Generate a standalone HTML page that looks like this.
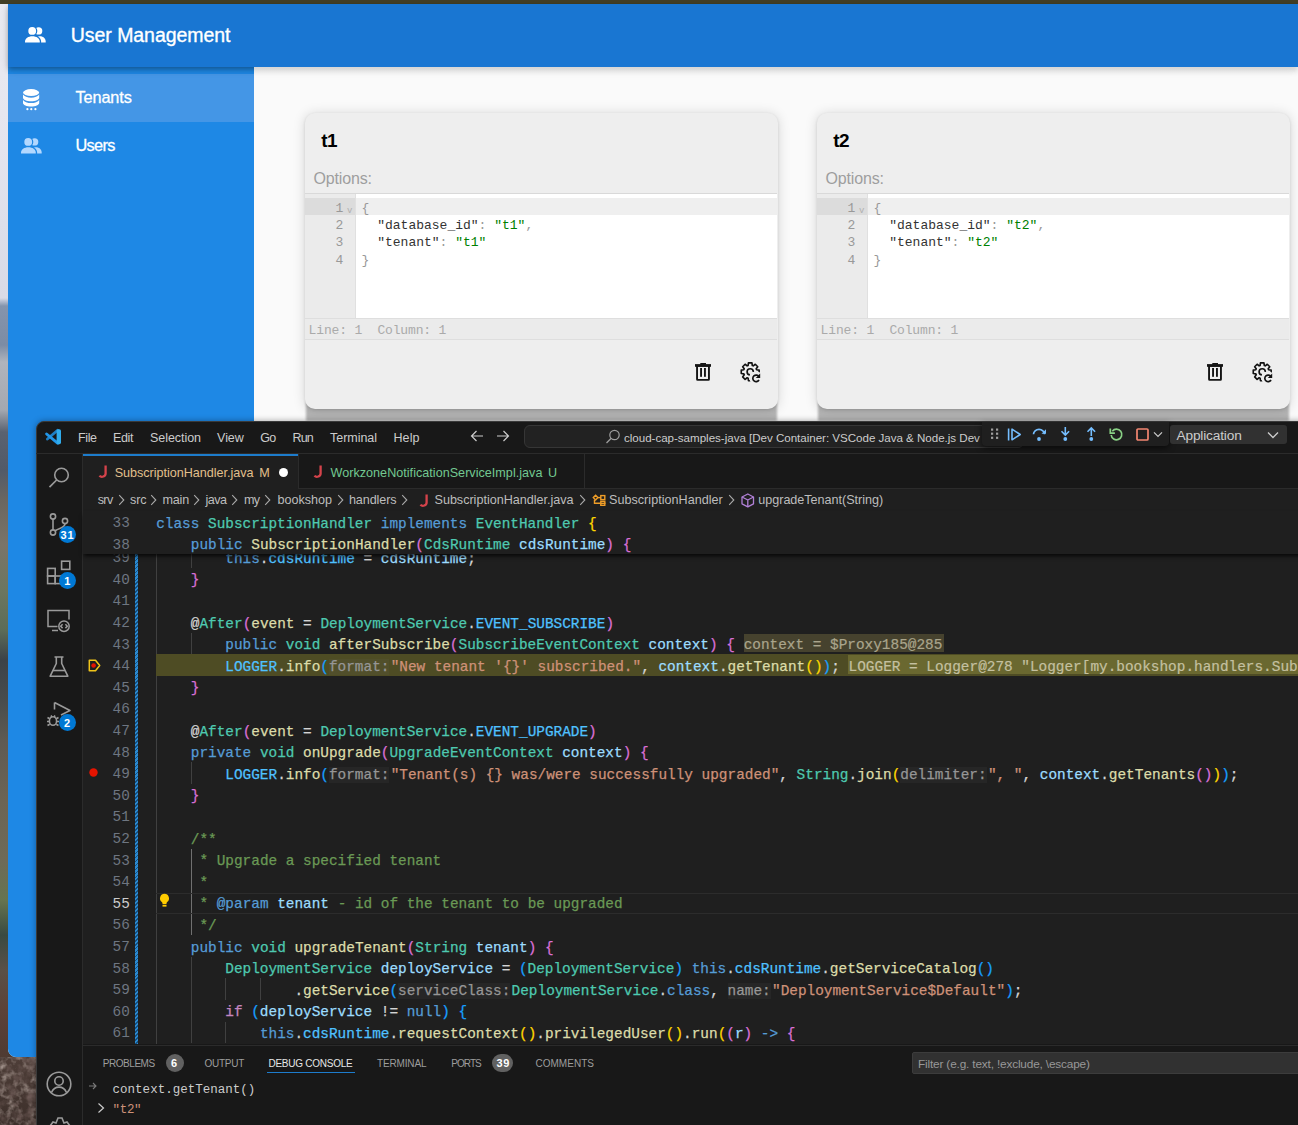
<!DOCTYPE html>
<html><head><meta charset="utf-8"><style>
html,body{margin:0;padding:0;width:1298px;height:1125px;overflow:hidden;background:#4a3a33}
.t{position:absolute;white-space:pre}
.r{position:absolute}
svg.r{overflow:visible}
</style></head><body>
<div class="r" style="left:0.0px;top:0.0px;width:8.0px;height:1125.0px;background:linear-gradient(180deg,#ececf2 0px,#e4e4ee 150px,#d8dae6 298px,#8494ac 306px,#7c8ca4 345px,#b0b4bc 362px,#a4a8b0 410px,#5a6270 432px,#525a68 470px,#6a6660 500px,#7a7468 545px,#6c7660 590px,#5c6c58 630px,#3c4248 660px,#484c4c 700px,#5e5a52 740px,#6c6454 800px,#6e6a58 860px,#667450 900px,#3a4a40 935px,#5a5046 970px,#5c4238 1010px,#4e3a32 1060px,#3e2e28 1125px)"></div>
<div class="r" style="left:0.0px;top:1057.0px;width:36.0px;height:68.0px;background:linear-gradient(180deg,#4e3e38,#3c2f2a)"></div>
<svg class="r" style="left:0.0px;top:1057.0px;" width="36" height="68" viewBox="0 0 36 68"><filter id="nz" x="0" y="0" width="100%" height="100%"><feTurbulence type="fractalNoise" baseFrequency="0.13" numOctaves="3" seed="3"/><feColorMatrix values="0 0 0 0 0.55  0 0 0 0 0.46  0 0 0 0 0.42  0 0 0 1.8 -0.85"/></filter><rect width="36" height="68" filter="url(#nz)"/></svg>
<svg class="r" style="left:0.0px;top:1057.0px;" width="36" height="68" viewBox="0 0 36 68"><filter id="nz2" x="0" y="0" width="100%" height="100%"><feTurbulence type="fractalNoise" baseFrequency="0.11" numOctaves="3" seed="9"/><feColorMatrix values="0 0 0 0 0.15  0 0 0 0 0.1  0 0 0 0 0.09  0 0 0 2.2 -0.95"/></filter><rect width="36" height="68" filter="url(#nz2)"/></svg>
<div class="r" style="left:0.0px;top:0.0px;width:1298.0px;height:4.0px;background:#433f26"></div>
<div class="r" style="left:8.0px;top:4.0px;width:1290.0px;height:1053.0px;background:#fafafa;border-bottom-left-radius:8px;overflow:hidden"></div>
<div class="r" style="left:8.0px;top:67.0px;width:246.0px;height:990.0px;background:#1e88e5;border-bottom-left-radius:8px"></div>
<div class="r" style="left:8.0px;top:74.0px;width:246.0px;height:48.0px;background:#4496e6"></div>
<div class="r" style="left:8.0px;top:4.0px;width:1290.0px;height:63.0px;background:#1976d2;box-shadow:0 2px 4px -1px rgba(0,0,0,.2),0 4px 5px 0 rgba(0,0,0,.14),0 1px 10px 0 rgba(0,0,0,.12)"></div>
<div class="r" style="left:254.0px;top:67.0px;width:1044.0px;height:8.0px;background:linear-gradient(180deg,rgba(250,250,250,.55),rgba(250,250,250,0))"></div>
<div class="t" style="left:70.8px;top:24.4px;font-size:19.50px;line-height:22px;color:#ffffff;font-family:'Liberation Sans', sans-serif;letter-spacing:-0.052px;-webkit-text-stroke:0.35px #fff;">User Management</div>
<div class="t" style="left:75.4px;top:88.1px;font-size:16.30px;line-height:18px;color:#ffffff;font-family:'Liberation Sans', sans-serif;letter-spacing:-0.080px;-webkit-text-stroke:0.3px #fff;">Tenants</div>
<div class="t" style="left:75.4px;top:135.5px;font-size:16.30px;line-height:18px;color:#ffffff;font-family:'Liberation Sans', sans-serif;letter-spacing:-0.616px;-webkit-text-stroke:0.3px #fff;">Users</div>
<svg class="r" style="left:25.0px;top:27.0px;" width="22" height="16" viewBox="0 0 22 16"><defs><mask id="pma" maskUnits="userSpaceOnUse" x="-2" y="-2" width="26" height="20"><rect x="-2" y="-2" width="26" height="20" fill="#fff"/><circle cx="7.2" cy="3.9" r="5.1" fill="#000"/><path d="M-1.3 16.8v-2.3c0-3.8 3.9-6.6 8.7-6.6s8.7 2.8 8.7 6.6v2.3z" fill="#000"/></mask></defs><g transform="translate(0,0) scale(1)" fill="#ffffff"><circle cx="7.2" cy="3.9" r="3.9"/><path d="M0 15.5v-1c0-3.1 3.3-5.3 7.4-5.3s7.4 2.2 7.4 5.3v1z"/><g mask="url(#pma)"><circle cx="13.6" cy="3.9" r="3.7"/><path d="M9.5 15.5v-1c0-3.1 2.6-5.3 5.6-5.3s5.6 2.2 5.6 5.3v1z"/></g></g></svg>
<svg class="r" style="left:21.0px;top:137.5px;" width="22" height="16" viewBox="0 0 22 16"><defs><mask id="pmb" maskUnits="userSpaceOnUse" x="-2" y="-2" width="26" height="20"><rect x="-2" y="-2" width="26" height="20" fill="#fff"/><circle cx="7.2" cy="3.9" r="5.1" fill="#000"/><path d="M-1.3 16.8v-2.3c0-3.8 3.9-6.6 8.7-6.6s8.7 2.8 8.7 6.6v2.3z" fill="#000"/></mask></defs><g transform="translate(0,0) scale(1)" fill="#b3d8ff"><circle cx="7.2" cy="3.9" r="3.9"/><path d="M0 15.5v-1c0-3.1 3.3-5.3 7.4-5.3s7.4 2.2 7.4 5.3v1z"/><g mask="url(#pmb)"><circle cx="13.6" cy="3.9" r="3.7"/><path d="M9.5 15.5v-1c0-3.1 2.6-5.3 5.6-5.3s5.6 2.2 5.6 5.3v1z"/></g></g></svg>
<svg class="r" style="left:23.0px;top:89.0px;" width="18" height="22" viewBox="0 0 18 22"><g fill="#fff"><ellipse cx="8.1" cy="3.6" rx="8.1" ry="3.5"/><path d="M0 5.6c1.2 2 4.4 3.1 8.1 3.1s6.9-1.1 8.1-3.1v3.2c0 1.9-3.6 3.5-8.1 3.5S0 10.7 0 8.8z"/><path d="M0 10.9c1.2 2 4.4 3.1 8.1 3.1s6.9-1.1 8.1-3.1v3.2c0 1.9-3.6 3.5-8.1 3.5S0 16 0 14.1z"/><circle cx="4.4" cy="20.2" r="1.1"/><circle cx="8.3" cy="20.2" r="1.1"/><circle cx="12.4" cy="20.2" r="1.1"/></g></svg>
<div class="r" style="left:306.0px;top:402.0px;width:471.0px;height:19.0px;background:#b5b5b5;filter:blur(1.2px)"></div>
<div class="r" style="left:305.0px;top:112.5px;width:473.0px;height:296.0px;background:#eeeeee;border-radius:10px;box-shadow:0 1px 12px 1px rgba(0,0,0,.13),0 1px 3px rgba(0,0,0,.12)"></div>
<div class="t" style="left:321.2px;top:129.6px;font-size:19.00px;line-height:21px;color:#000000;font-family:'Liberation Sans', sans-serif;font-weight:bold;letter-spacing:-0.6px;">t1</div>
<div class="t" style="left:313.5px;top:169.6px;font-size:16.00px;line-height:17px;color:#9e9e9e;font-family:'Liberation Sans', sans-serif;letter-spacing:-0.163px;">Options:</div>
<div class="r" style="left:305.0px;top:193.0px;width:472.0px;height:1.0px;background:#d9d9d9"></div>
<div class="r" style="left:305.0px;top:194.0px;width:472.0px;height:124.0px;background:#ffffff"></div>
<div class="r" style="left:305.0px;top:194.0px;width:50.0px;height:124.0px;background:#ebebeb"></div>
<div class="r" style="left:355.0px;top:194.0px;width:1.0px;height:124.0px;background:#e0e0e0"></div>
<div class="r" style="left:305.0px;top:198.3px;width:50.0px;height:17.2px;background:#dcdcdc"></div>
<div class="r" style="left:356.0px;top:198.3px;width:421.0px;height:17.2px;background:#efefef"></div>
<div class="r" style="left:305.0px;top:318.0px;width:472.0px;height:22.0px;background:#ebebeb;border-top:1px solid #dedede;border-bottom:1px solid #dedede;box-sizing:border-box"></div>
<div class="t" style="left:335.6px;top:200.8px;font-size:13.00px;line-height:15px;color:#999999;font-family:'Liberation Mono', monospace;">1</div>
<div class="t" style="left:335.6px;top:218.1px;font-size:13.00px;line-height:15px;color:#999999;font-family:'Liberation Mono', monospace;">2</div>
<div class="t" style="left:335.6px;top:235.3px;font-size:13.00px;line-height:15px;color:#999999;font-family:'Liberation Mono', monospace;">3</div>
<div class="t" style="left:335.6px;top:252.6px;font-size:13.00px;line-height:15px;color:#999999;font-family:'Liberation Mono', monospace;">4</div>
<div class="t" style="left:347.0px;top:206.0px;font-size:9.00px;line-height:10px;color:#b0b0b0;font-family:'Liberation Mono', monospace;">v</div>
<div class="t" style="left:361.6px;top:200.8px;font-size:13.00px;line-height:15px;color:#333333;font-family:'Liberation Mono', monospace;"><span style="color:#999999">{</span></div>
<div class="t" style="left:377.2px;top:218.1px;font-size:13.00px;line-height:15px;color:#333333;font-family:'Liberation Mono', monospace;"><span style="color:#333333">&quot;database_id&quot;</span><span style="color:#999999">: </span><span style="color:#008000">&quot;t1&quot;</span><span style="color:#999999">,</span></div>
<div class="t" style="left:377.2px;top:235.3px;font-size:13.00px;line-height:15px;color:#333333;font-family:'Liberation Mono', monospace;"><span style="color:#333333">&quot;tenant&quot;</span><span style="color:#999999">: </span><span style="color:#008000">&quot;t1&quot;</span></div>
<div class="t" style="left:361.6px;top:252.6px;font-size:13.00px;line-height:15px;color:#333333;font-family:'Liberation Mono', monospace;"><span style="color:#999999">}</span></div>
<div class="t" style="left:308.6px;top:322.6px;font-size:13.00px;line-height:15px;color:#aaaaaa;font-family:'Liberation Mono', monospace;letter-spacing:-0.156px;">Line: 1  Column: 1</div>
<svg class="r" style="left:695.0px;top:363.0px;" width="16" height="18" viewBox="0 0 16 18"><g fill="#141414"><rect x="0" y="1.1" width="16" height="2.7"/><rect x="5.3" y="0" width="5.7" height="1.8"/><path fill-rule="evenodd" d="M1.1 2.8H14.9V16.3a1.5 1.5 0 0 1-1.5 1.5H2.6a1.5 1.5 0 0 1-1.5-1.5z M3 3.8H13V15.9H3z"/><rect x="5.1" y="5" width="1.9" height="8.8"/><rect x="9" y="5" width="1.9" height="8.8"/></g></svg>
<svg class="r" style="left:736.0px;top:358.0px;" width="30" height="28" viewBox="0 0 30 28"><defs><mask id="g305" maskUnits="userSpaceOnUse" x="0" y="0" width="30" height="28"><rect width="30" height="28" fill="#fff"/><circle cx="20.4" cy="20.4" r="6.9" fill="#000"/></mask><mask id="g305c" maskUnits="userSpaceOnUse" x="0" y="0" width="30" height="28"><rect width="30" height="28" fill="#fff"/><path d="M14.2 13.8L22 14.2V24H13.2z" fill="#000"/></mask></defs><g fill="none" stroke="#111" stroke-width="1.65" stroke-linejoin="round"><path mask="url(#g305)" d="M12.13 7.43 L12.46 4.87 L15.94 4.87 L16.27 7.43 L17.24 7.83 L19.29 6.26 L21.74 8.71 L20.17 10.76 L20.57 11.73 L23.13 12.06 L23.13 15.54 L20.57 15.87 L20.17 16.84 L21.74 18.89 L19.29 21.34 L17.24 19.77 L16.27 20.17 L15.94 22.73 L12.46 22.73 L12.13 20.17 L11.16 19.77 L9.11 21.34 L6.66 18.89 L8.23 16.84 L7.83 15.87 L5.27 15.54 L5.27 12.06 L7.83 11.73 L8.23 10.76 L6.66 8.71 L9.11 6.26 L11.16 7.83Z"/><circle mask="url(#g305c)" cx="14.2" cy="13.8" r="3.1"/><path d="M22.9 18.6A3.3 3.3 0 1 0 23 22"/></g><path d="M24.2 15.6v4.4h-4.4z" fill="#111"/></svg>
<div class="r" style="left:818.0px;top:402.0px;width:471.0px;height:19.0px;background:#b5b5b5;filter:blur(1.2px)"></div>
<div class="r" style="left:817.0px;top:112.5px;width:473.0px;height:296.0px;background:#eeeeee;border-radius:10px;box-shadow:0 1px 12px 1px rgba(0,0,0,.13),0 1px 3px rgba(0,0,0,.12)"></div>
<div class="t" style="left:833.2px;top:129.6px;font-size:19.00px;line-height:21px;color:#000000;font-family:'Liberation Sans', sans-serif;font-weight:bold;letter-spacing:-0.6px;">t2</div>
<div class="t" style="left:825.5px;top:169.6px;font-size:16.00px;line-height:17px;color:#9e9e9e;font-family:'Liberation Sans', sans-serif;letter-spacing:-0.163px;">Options:</div>
<div class="r" style="left:817.0px;top:193.0px;width:472.0px;height:1.0px;background:#d9d9d9"></div>
<div class="r" style="left:817.0px;top:194.0px;width:472.0px;height:124.0px;background:#ffffff"></div>
<div class="r" style="left:817.0px;top:194.0px;width:50.0px;height:124.0px;background:#ebebeb"></div>
<div class="r" style="left:867.0px;top:194.0px;width:1.0px;height:124.0px;background:#e0e0e0"></div>
<div class="r" style="left:817.0px;top:198.3px;width:50.0px;height:17.2px;background:#dcdcdc"></div>
<div class="r" style="left:868.0px;top:198.3px;width:421.0px;height:17.2px;background:#efefef"></div>
<div class="r" style="left:817.0px;top:318.0px;width:472.0px;height:22.0px;background:#ebebeb;border-top:1px solid #dedede;border-bottom:1px solid #dedede;box-sizing:border-box"></div>
<div class="t" style="left:847.6px;top:200.8px;font-size:13.00px;line-height:15px;color:#999999;font-family:'Liberation Mono', monospace;">1</div>
<div class="t" style="left:847.6px;top:218.1px;font-size:13.00px;line-height:15px;color:#999999;font-family:'Liberation Mono', monospace;">2</div>
<div class="t" style="left:847.6px;top:235.3px;font-size:13.00px;line-height:15px;color:#999999;font-family:'Liberation Mono', monospace;">3</div>
<div class="t" style="left:847.6px;top:252.6px;font-size:13.00px;line-height:15px;color:#999999;font-family:'Liberation Mono', monospace;">4</div>
<div class="t" style="left:859.0px;top:206.0px;font-size:9.00px;line-height:10px;color:#b0b0b0;font-family:'Liberation Mono', monospace;">v</div>
<div class="t" style="left:873.6px;top:200.8px;font-size:13.00px;line-height:15px;color:#333333;font-family:'Liberation Mono', monospace;"><span style="color:#999999">{</span></div>
<div class="t" style="left:889.2px;top:218.1px;font-size:13.00px;line-height:15px;color:#333333;font-family:'Liberation Mono', monospace;"><span style="color:#333333">&quot;database_id&quot;</span><span style="color:#999999">: </span><span style="color:#008000">&quot;t2&quot;</span><span style="color:#999999">,</span></div>
<div class="t" style="left:889.2px;top:235.3px;font-size:13.00px;line-height:15px;color:#333333;font-family:'Liberation Mono', monospace;"><span style="color:#333333">&quot;tenant&quot;</span><span style="color:#999999">: </span><span style="color:#008000">&quot;t2&quot;</span></div>
<div class="t" style="left:873.6px;top:252.6px;font-size:13.00px;line-height:15px;color:#333333;font-family:'Liberation Mono', monospace;"><span style="color:#999999">}</span></div>
<div class="t" style="left:820.6px;top:322.6px;font-size:13.00px;line-height:15px;color:#aaaaaa;font-family:'Liberation Mono', monospace;letter-spacing:-0.156px;">Line: 1  Column: 1</div>
<svg class="r" style="left:1207.0px;top:363.0px;" width="16" height="18" viewBox="0 0 16 18"><g fill="#141414"><rect x="0" y="1.1" width="16" height="2.7"/><rect x="5.3" y="0" width="5.7" height="1.8"/><path fill-rule="evenodd" d="M1.1 2.8H14.9V16.3a1.5 1.5 0 0 1-1.5 1.5H2.6a1.5 1.5 0 0 1-1.5-1.5z M3 3.8H13V15.9H3z"/><rect x="5.1" y="5" width="1.9" height="8.8"/><rect x="9" y="5" width="1.9" height="8.8"/></g></svg>
<svg class="r" style="left:1248.0px;top:358.0px;" width="30" height="28" viewBox="0 0 30 28"><defs><mask id="g817" maskUnits="userSpaceOnUse" x="0" y="0" width="30" height="28"><rect width="30" height="28" fill="#fff"/><circle cx="20.4" cy="20.4" r="6.9" fill="#000"/></mask><mask id="g817c" maskUnits="userSpaceOnUse" x="0" y="0" width="30" height="28"><rect width="30" height="28" fill="#fff"/><path d="M14.2 13.8L22 14.2V24H13.2z" fill="#000"/></mask></defs><g fill="none" stroke="#111" stroke-width="1.65" stroke-linejoin="round"><path mask="url(#g817)" d="M12.13 7.43 L12.46 4.87 L15.94 4.87 L16.27 7.43 L17.24 7.83 L19.29 6.26 L21.74 8.71 L20.17 10.76 L20.57 11.73 L23.13 12.06 L23.13 15.54 L20.57 15.87 L20.17 16.84 L21.74 18.89 L19.29 21.34 L17.24 19.77 L16.27 20.17 L15.94 22.73 L12.46 22.73 L12.13 20.17 L11.16 19.77 L9.11 21.34 L6.66 18.89 L8.23 16.84 L7.83 15.87 L5.27 15.54 L5.27 12.06 L7.83 11.73 L8.23 10.76 L6.66 8.71 L9.11 6.26 L11.16 7.83Z"/><circle mask="url(#g817c)" cx="14.2" cy="13.8" r="3.1"/><path d="M22.9 18.6A3.3 3.3 0 1 0 23 22"/></g><path d="M24.2 15.6v4.4h-4.4z" fill="#111"/></svg>
<div class="r" style="left:36.0px;top:421.0px;width:1272.0px;height:714.0px;background:#181818;border-top-left-radius:8px;box-shadow:0 0 6px rgba(0,0,0,.35);border:1px solid #3a3a3a;box-sizing:border-box"></div>
<div class="r" style="left:36.0px;top:453.0px;width:1262.0px;height:1.0px;background:#2b2b2b"></div>
<svg class="r" style="left:44.0px;top:428.0px;" width="18" height="18" viewBox="0 0 18 18"><g stroke-linecap="round"><path d="M13.6 2.2L3.4 11" stroke="#1e7fc4" stroke-width="2.8"/><path d="M13.6 15.2L2.6 6" stroke="#2196e8" stroke-width="2.9"/><rect x="12.6" y="1.2" width="4.4" height="15" rx="1.6" fill="#30acec"/></g></svg>
<div class="t" style="left:78.0px;top:430.6px;font-size:12.50px;line-height:14px;color:#cccccc;font-family:'Liberation Sans', sans-serif;letter-spacing:-0.385px;">File</div>
<div class="t" style="left:113.1px;top:430.6px;font-size:12.50px;line-height:14px;color:#cccccc;font-family:'Liberation Sans', sans-serif;letter-spacing:-0.382px;">Edit</div>
<div class="t" style="left:150.1px;top:430.6px;font-size:12.50px;line-height:14px;color:#cccccc;font-family:'Liberation Sans', sans-serif;letter-spacing:-0.067px;">Selection</div>
<div class="t" style="left:217.1px;top:430.6px;font-size:12.50px;line-height:14px;color:#cccccc;font-family:'Liberation Sans', sans-serif;letter-spacing:-0.064px;">View</div>
<div class="t" style="left:260.3px;top:430.6px;font-size:12.50px;line-height:14px;color:#cccccc;font-family:'Liberation Sans', sans-serif;letter-spacing:-0.672px;">Go</div>
<div class="t" style="left:292.6px;top:430.6px;font-size:12.50px;line-height:14px;color:#cccccc;font-family:'Liberation Sans', sans-serif;letter-spacing:-0.969px;">Run</div>
<div class="t" style="left:330.0px;top:430.6px;font-size:12.50px;line-height:14px;color:#cccccc;font-family:'Liberation Sans', sans-serif;letter-spacing:-0.033px;">Terminal</div>
<div class="t" style="left:393.5px;top:430.6px;font-size:12.50px;line-height:14px;color:#cccccc;font-family:'Liberation Sans', sans-serif;letter-spacing:0.094px;">Help</div>
<svg class="r" style="left:470.0px;top:430.0px;" width="14" height="12" viewBox="0 0 14 12"><path d="M13 6H1.5M6.5 1L1.5 6l5 5" fill="none" stroke="#cccccc" stroke-width="1.2"/></svg>
<svg class="r" style="left:496.0px;top:430.0px;" width="14" height="12" viewBox="0 0 14 12"><path d="M1 6h11.5M7.5 1l5 5-5 5" fill="none" stroke="#cccccc" stroke-width="1.2"/></svg>
<div class="r" style="left:524.3px;top:425.2px;width:500.0px;height:23.2px;background:#222222;border:1px solid #363636;border-radius:6px;box-sizing:border-box"></div>
<svg class="r" style="left:605.0px;top:429.0px;" width="16" height="16" viewBox="0 0 16 16"><circle cx="9.5" cy="6" r="4.7" fill="none" stroke="#9d9d9d" stroke-width="1.2"/><path d="M6.2 9.3L1.5 14" stroke="#9d9d9d" stroke-width="1.3"/></svg>
<div class="t" style="left:624.0px;top:430.5px;font-size:11.60px;line-height:13px;color:#cccccc;font-family:'Liberation Sans', sans-serif;letter-spacing:-0.028px;">cloud-cap-samples-java [Dev Container: VSCode Java &amp; Node.js Dev</div>
<div class="r" style="left:981.5px;top:421.7px;width:187.0px;height:24.5px;background:#1f1f1f;border-radius:0 0 4px 4px;box-shadow:0 2px 6px rgba(0,0,0,.6)"></div>
<svg class="r" style="left:991.0px;top:428.0px;" width="9" height="12" viewBox="0 0 9 12"><g fill="#9d9d9d"><rect x="0" y="0.5" width="2.2" height="2.2"/><rect x="5" y="0.5" width="2.2" height="2.2"/><rect x="0" y="4.6" width="2.2" height="2.2"/><rect x="5" y="4.6" width="2.2" height="2.2"/><rect x="0" y="8.7" width="2.2" height="2.2"/><rect x="5" y="8.7" width="2.2" height="2.2"/></g></svg>
<svg class="r" style="left:1007.0px;top:427.5px;" width="15" height="13" viewBox="0 0 15 13"><rect x="0.8" y="0.5" width="1.6" height="12" fill="#75beff"/><path d="M5 1.2v10.6l8.2-5.3z" fill="none" stroke="#75beff" stroke-width="1.6" stroke-linejoin="round"/></svg>
<svg class="r" style="left:1032.0px;top:427.5px;" width="15" height="14" viewBox="0 0 15 14"><path d="M1.5 6.3a5.5 5 0 0 1 11 0" fill="none" stroke="#75beff" stroke-width="1.7"/><path d="M9.5 5.8h4.5V1.3z" fill="#75beff"/><circle cx="7" cy="11" r="1.9" fill="#75beff"/></svg>
<svg class="r" style="left:1060.0px;top:427.0px;" width="11" height="15" viewBox="0 0 11 15"><path d="M5.3 0v7.5M1.5 4.3l3.8 3.8 3.8-3.8" fill="none" stroke="#75beff" stroke-width="1.6"/><circle cx="5.3" cy="12" r="1.9" fill="#75beff"/></svg>
<svg class="r" style="left:1085.5px;top:427.0px;" width="11" height="15" viewBox="0 0 11 15"><path d="M5.3 1v8M1.5 4.8L5.3 1l3.8 3.8" fill="none" stroke="#75beff" stroke-width="1.6"/><circle cx="5.3" cy="12" r="1.9" fill="#75beff"/></svg>
<svg class="r" style="left:1109.0px;top:427.0px;" width="15" height="14" viewBox="0 0 15 14"><path d="M3.3 4.2A5.3 5.3 0 1 1 2.2 8" fill="none" stroke="#89d185" stroke-width="1.7"/><path d="M1.3 1.5v4.6h4.6" fill="none" stroke="#89d185" stroke-width="1.7"/></svg>
<svg class="r" style="left:1135.5px;top:427.5px;" width="13" height="13" viewBox="0 0 13 13"><rect x="1" y="1" width="11" height="11" rx="1" fill="none" stroke="#f48771" stroke-width="1.7"/></svg>
<svg class="r" style="left:1153.0px;top:431.0px;" width="10" height="7" viewBox="0 0 10 7"><path d="M1 1.3l4 4 4-4" fill="none" stroke="#cccccc" stroke-width="1.2"/></svg>
<div class="r" style="left:1169.6px;top:425.1px;width:117.0px;height:18.6px;background:#313131;border-radius:3px"></div>
<div class="t" style="left:1176.5px;top:428.0px;font-size:13.70px;line-height:15px;color:#cccccc;font-family:'Liberation Sans', sans-serif;letter-spacing:-0.165px;">Application</div>
<svg class="r" style="left:1267.0px;top:431.0px;" width="12" height="8" viewBox="0 0 12 8"><path d="M1 1.5l5 5 5-5" fill="none" stroke="#cccccc" stroke-width="1.3"/></svg>
<div class="r" style="left:82.0px;top:454.0px;width:1.0px;height:700.0px;background:#2b2b2b"></div>
<div class="r" style="left:83.0px;top:454.0px;width:1300.0px;height:590.0px;background:#1f1f1f"></div>
<div class="r" style="left:83.0px;top:454.0px;width:1300.0px;height:34.0px;background:#181818"></div>
<div class="r" style="left:298.0px;top:487.5px;width:1300.0px;height:1.0px;background:#2b2b2b"></div>
<div class="r" style="left:83.0px;top:454.0px;width:215.0px;height:34.0px;background:#1f1f1f"></div>
<div class="r" style="left:83.0px;top:454.0px;width:215.0px;height:1.6px;background:#1d7ccc"></div>
<div class="r" style="left:298.0px;top:454.0px;width:1.0px;height:34.0px;background:#2b2b2b"></div>
<div class="r" style="left:583.5px;top:454.0px;width:1.0px;height:34.0px;background:#2b2b2b"></div>
<svg class="r" style="left:99.0px;top:465.0px;" width="9" height="13" viewBox="0 0 9 13"><path d="M6.6 0.5v7.9a3.6 3.4 0 0 1-6.2 2.3" fill="none" stroke="#d5434b" stroke-width="2.3"/></svg>
<div class="t" style="left:114.7px;top:465.8px;font-size:12.60px;line-height:14px;color:#e2c08d;font-family:'Liberation Sans', sans-serif;letter-spacing:-0.025px;">SubscriptionHandler.java</div>
<div class="t" style="left:259.2px;top:465.5px;font-size:12.60px;line-height:14px;color:#e2c08d;font-family:'Liberation Sans', sans-serif;">M</div>
<div class="r" style="left:278.8px;top:468.2px;width:9.0px;height:9.0px;background:#ffffff;border-radius:50%"></div>
<svg class="r" style="left:314.0px;top:465.0px;" width="9" height="13" viewBox="0 0 9 13"><path d="M6.6 0.5v7.9a3.6 3.4 0 0 1-6.2 2.3" fill="none" stroke="#d5434b" stroke-width="2.3"/></svg>
<div class="t" style="left:330.5px;top:465.8px;font-size:12.60px;line-height:14px;color:#73c991;font-family:'Liberation Sans', sans-serif;letter-spacing:0.021px;">WorkzoneNotificationServiceImpl.java</div>
<div class="t" style="left:548.0px;top:465.5px;font-size:12.60px;line-height:14px;color:#73c991;font-family:'Liberation Sans', sans-serif;">U</div>
<div class="t" style="left:97.7px;top:493.3px;font-size:12.60px;line-height:14px;color:#bdbdbd;font-family:'Liberation Sans', sans-serif;letter-spacing:-0.641px;">srv</div>
<div class="t" style="left:130.0px;top:493.3px;font-size:12.60px;line-height:14px;color:#bdbdbd;font-family:'Liberation Sans', sans-serif;letter-spacing:-0.141px;">src</div>
<div class="t" style="left:162.4px;top:493.3px;font-size:12.60px;line-height:14px;color:#bdbdbd;font-family:'Liberation Sans', sans-serif;letter-spacing:-0.160px;">main</div>
<div class="t" style="left:205.6px;top:493.3px;font-size:12.60px;line-height:14px;color:#bdbdbd;font-family:'Liberation Sans', sans-serif;letter-spacing:-0.565px;">java</div>
<div class="t" style="left:244.0px;top:493.3px;font-size:12.60px;line-height:14px;color:#bdbdbd;font-family:'Liberation Sans', sans-serif;letter-spacing:-0.781px;">my</div>
<div class="t" style="left:277.4px;top:493.3px;font-size:12.60px;line-height:14px;color:#bdbdbd;font-family:'Liberation Sans', sans-serif;letter-spacing:0.001px;">bookshop</div>
<div class="t" style="left:348.9px;top:493.3px;font-size:12.60px;line-height:14px;color:#bdbdbd;font-family:'Liberation Sans', sans-serif;letter-spacing:-0.083px;">handlers</div>
<svg class="r" style="left:117.5px;top:494.0px;" width="7" height="12" viewBox="0 0 7 12"><path d="M1.2 1.2L5.8 6l-4.6 4.8" fill="none" stroke="#a9a9a9" stroke-width="1.1"/></svg>
<svg class="r" style="left:150.0px;top:494.0px;" width="7" height="12" viewBox="0 0 7 12"><path d="M1.2 1.2L5.8 6l-4.6 4.8" fill="none" stroke="#a9a9a9" stroke-width="1.1"/></svg>
<svg class="r" style="left:193.0px;top:494.0px;" width="7" height="12" viewBox="0 0 7 12"><path d="M1.2 1.2L5.8 6l-4.6 4.8" fill="none" stroke="#a9a9a9" stroke-width="1.1"/></svg>
<svg class="r" style="left:230.5px;top:494.0px;" width="7" height="12" viewBox="0 0 7 12"><path d="M1.2 1.2L5.8 6l-4.6 4.8" fill="none" stroke="#a9a9a9" stroke-width="1.1"/></svg>
<svg class="r" style="left:263.5px;top:494.0px;" width="7" height="12" viewBox="0 0 7 12"><path d="M1.2 1.2L5.8 6l-4.6 4.8" fill="none" stroke="#a9a9a9" stroke-width="1.1"/></svg>
<svg class="r" style="left:336.5px;top:494.0px;" width="7" height="12" viewBox="0 0 7 12"><path d="M1.2 1.2L5.8 6l-4.6 4.8" fill="none" stroke="#a9a9a9" stroke-width="1.1"/></svg>
<svg class="r" style="left:401.0px;top:494.0px;" width="7" height="12" viewBox="0 0 7 12"><path d="M1.2 1.2L5.8 6l-4.6 4.8" fill="none" stroke="#a9a9a9" stroke-width="1.1"/></svg>
<svg class="r" style="left:419.5px;top:493.5px;" width="9" height="13" viewBox="0 0 9 13"><path d="M6.6 0.5v7.9a3.6 3.4 0 0 1-6.2 2.3" fill="none" stroke="#d5434b" stroke-width="2.3"/></svg>
<div class="t" style="left:434.5px;top:493.3px;font-size:12.60px;line-height:14px;color:#bdbdbd;font-family:'Liberation Sans', sans-serif;letter-spacing:-0.012px;">SubscriptionHandler.java</div>
<svg class="r" style="left:579.0px;top:494.0px;" width="7" height="12" viewBox="0 0 7 12"><path d="M1.2 1.2L5.8 6l-4.6 4.8" fill="none" stroke="#a9a9a9" stroke-width="1.1"/></svg>
<svg class="r" style="left:590.5px;top:492.5px;" width="16" height="15" viewBox="0 0 16 15"><g fill="none" stroke="#ee9d28" stroke-width="1.4"><path d="M4.6 2.3L2.3 4.6l2.3 2.3 2.3-2.3z"/><path d="M3.5 6.8v3.5h6"/><path d="M9.5 10.3h5"/><rect x="9.8" y="8.3" width="4" height="4"/><path d="M6.8 4.6h3"/><rect x="9.8" y="2.6" width="4" height="4"/></g></svg>
<div class="t" style="left:609.0px;top:493.3px;font-size:12.60px;line-height:14px;color:#bdbdbd;font-family:'Liberation Sans', sans-serif;letter-spacing:0.019px;">SubscriptionHandler</div>
<svg class="r" style="left:728.0px;top:494.0px;" width="7" height="12" viewBox="0 0 7 12"><path d="M1.2 1.2L5.8 6l-4.6 4.8" fill="none" stroke="#a9a9a9" stroke-width="1.1"/></svg>
<svg class="r" style="left:740.5px;top:492.5px;" width="14" height="15" viewBox="0 0 14 15"><g fill="none" stroke="#b180d7" stroke-width="1.3" stroke-linejoin="round"><path d="M6.8 1L12.5 4v6.8L6.8 13.8 1 10.8V4z"/><path d="M1 4l5.8 3 5.7-3M6.8 7v6.8"/></g></svg>
<div class="t" style="left:758.3px;top:493.3px;font-size:12.60px;line-height:14px;color:#bdbdbd;font-family:'Liberation Sans', sans-serif;letter-spacing:-0.027px;">upgradeTenant(String)</div>
<div class="r" style="left:134.8px;top:554.0px;width:3.2px;height:490.0px;background:repeating-linear-gradient(135deg,#2a8ad2 0px,#2a8ad2 1.6px,#17507e 1.6px,#17507e 2.8px)"></div>
<div class="r" style="left:156.0px;top:554.0px;width:1.0px;height:490.0px;background:#404040"></div>
<div class="r" style="left:190.5px;top:554.0px;width:1.0px;height:14.0px;background:#404040"></div>
<div class="r" style="left:190.5px;top:632.8px;width:1.0px;height:43.2px;background:#404040"></div>
<div class="r" style="left:190.5px;top:762.4px;width:1.0px;height:21.6px;background:#404040"></div>
<div class="r" style="left:190.5px;top:848.8px;width:1.0px;height:86.4px;background:#707070"></div>
<div class="r" style="left:190.5px;top:956.8px;width:1.0px;height:86.4px;background:#404040"></div>
<div class="r" style="left:225.0px;top:978.4px;width:1.0px;height:21.6px;background:#404040"></div>
<div class="r" style="left:259.6px;top:978.4px;width:1.0px;height:21.6px;background:#404040"></div>
<div class="r" style="left:225.0px;top:1021.6px;width:1.0px;height:21.6px;background:#404040"></div>
<div class="r" style="left:156.0px;top:654.3px;width:1200.0px;height:21.7px;background:#4e4c24"></div>
<div class="r" style="left:156.0px;top:893.2px;width:1200.0px;height:20.4px;border-top:1.5px solid #2c2c2c;border-bottom:1.5px solid #2c2c2c;box-sizing:border-box"></div>
<div class="t" style="left:225.3px;top:550.8px;font-size:14.40px;line-height:16px;color:#d4d4d4;font-family:'Liberation Mono', monospace;white-space:pre;-webkit-text-stroke:0.25px currentColor;"><span style="color:#569cd6">this</span><span style="color:#d4d4d4">.</span><span style="color:#4fc1ff">cdsRuntime</span><span style="color:#d4d4d4"> = </span><span style="color:#9cdcfe">cdsRuntime</span><span style="color:#d4d4d4">;</span></div>
<div class="t" style="left:112.6px;top:550.2px;font-size:14.40px;line-height:16px;color:#6e7681;font-family:'Liberation Mono', monospace;">39</div>
<div class="t" style="left:112.6px;top:571.8px;font-size:14.40px;line-height:16px;color:#6e7681;font-family:'Liberation Mono', monospace;">40</div>
<div class="t" style="left:190.8px;top:572.4px;font-size:14.40px;line-height:16px;color:#d4d4d4;font-family:'Liberation Mono', monospace;white-space:pre;-webkit-text-stroke:0.25px currentColor;"><span style="color:#da70d6">}</span></div>
<div class="t" style="left:112.6px;top:593.4px;font-size:14.40px;line-height:16px;color:#6e7681;font-family:'Liberation Mono', monospace;">41</div>
<div class="t" style="left:112.6px;top:615.0px;font-size:14.40px;line-height:16px;color:#6e7681;font-family:'Liberation Mono', monospace;">42</div>
<div class="t" style="left:190.8px;top:615.6px;font-size:14.40px;line-height:16px;color:#d4d4d4;font-family:'Liberation Mono', monospace;white-space:pre;-webkit-text-stroke:0.25px currentColor;"><span style="color:#d4d4d4">@</span><span style="color:#4ec9b0">After</span><span style="color:#da70d6">(</span><span style="color:#dcdcaa">event</span><span style="color:#d4d4d4"> = </span><span style="color:#4ec9b0">DeploymentService</span><span style="color:#d4d4d4">.</span><span style="color:#4fc1ff">EVENT_SUBSCRIBE</span><span style="color:#da70d6">)</span></div>
<div class="t" style="left:112.6px;top:636.6px;font-size:14.40px;line-height:16px;color:#6e7681;font-family:'Liberation Mono', monospace;">43</div>
<div class="t" style="left:225.3px;top:637.2px;font-size:14.40px;line-height:16px;color:#d4d4d4;font-family:'Liberation Mono', monospace;white-space:pre;-webkit-text-stroke:0.25px currentColor;"><span style="color:#569cd6">public</span> <span style="color:#4ec9b0">void</span> <span style="color:#dcdcaa">afterSubscribe</span><span style="color:#da70d6">(</span><span style="color:#4ec9b0">SubscribeEventContext</span> <span style="color:#9cdcfe">context</span><span style="color:#da70d6">)</span> <span style="color:#da70d6">{</span></div>
<div class="t" style="left:112.6px;top:658.2px;font-size:14.40px;line-height:16px;color:#6e7681;font-family:'Liberation Mono', monospace;">44</div>
<div class="t" style="left:225.3px;top:658.8px;font-size:14.40px;line-height:16px;color:#d4d4d4;font-family:'Liberation Mono', monospace;white-space:pre;-webkit-text-stroke:0.25px currentColor;"><span style="color:#4fc1ff">LOGGER</span><span style="color:#d4d4d4">.</span><span style="color:#dcdcaa">info</span><span style="color:#179fff">(</span><span style="color:#969696;background:rgba(110,110,110,.1);margin-right:1.3px">format:</span><span style="color:#ce9178">&quot;New tenant &#x27;{}&#x27; subscribed.&quot;</span><span style="color:#d4d4d4">, </span><span style="color:#9cdcfe">context</span><span style="color:#d4d4d4">.</span><span style="color:#dcdcaa">getTenant</span><span style="color:#ffd700">(</span><span style="color:#ffd700">)</span><span style="color:#179fff">)</span><span style="color:#d4d4d4">;</span></div>
<div class="t" style="left:112.6px;top:679.8px;font-size:14.40px;line-height:16px;color:#6e7681;font-family:'Liberation Mono', monospace;">45</div>
<div class="t" style="left:190.8px;top:680.4px;font-size:14.40px;line-height:16px;color:#d4d4d4;font-family:'Liberation Mono', monospace;white-space:pre;-webkit-text-stroke:0.25px currentColor;"><span style="color:#da70d6">}</span></div>
<div class="t" style="left:112.6px;top:701.4px;font-size:14.40px;line-height:16px;color:#6e7681;font-family:'Liberation Mono', monospace;">46</div>
<div class="t" style="left:112.6px;top:723.0px;font-size:14.40px;line-height:16px;color:#6e7681;font-family:'Liberation Mono', monospace;">47</div>
<div class="t" style="left:190.8px;top:723.6px;font-size:14.40px;line-height:16px;color:#d4d4d4;font-family:'Liberation Mono', monospace;white-space:pre;-webkit-text-stroke:0.25px currentColor;"><span style="color:#d4d4d4">@</span><span style="color:#4ec9b0">After</span><span style="color:#da70d6">(</span><span style="color:#dcdcaa">event</span><span style="color:#d4d4d4"> = </span><span style="color:#4ec9b0">DeploymentService</span><span style="color:#d4d4d4">.</span><span style="color:#4fc1ff">EVENT_UPGRADE</span><span style="color:#da70d6">)</span></div>
<div class="t" style="left:112.6px;top:744.6px;font-size:14.40px;line-height:16px;color:#6e7681;font-family:'Liberation Mono', monospace;">48</div>
<div class="t" style="left:190.8px;top:745.2px;font-size:14.40px;line-height:16px;color:#d4d4d4;font-family:'Liberation Mono', monospace;white-space:pre;-webkit-text-stroke:0.25px currentColor;"><span style="color:#569cd6">private</span> <span style="color:#4ec9b0">void</span> <span style="color:#dcdcaa">onUpgrade</span><span style="color:#da70d6">(</span><span style="color:#4ec9b0">UpgradeEventContext</span> <span style="color:#9cdcfe">context</span><span style="color:#da70d6">)</span> <span style="color:#da70d6">{</span></div>
<div class="t" style="left:112.6px;top:766.2px;font-size:14.40px;line-height:16px;color:#6e7681;font-family:'Liberation Mono', monospace;">49</div>
<div class="t" style="left:225.3px;top:766.8px;font-size:14.40px;line-height:16px;color:#d4d4d4;font-family:'Liberation Mono', monospace;white-space:pre;-webkit-text-stroke:0.25px currentColor;"><span style="color:#4fc1ff">LOGGER</span><span style="color:#d4d4d4">.</span><span style="color:#dcdcaa">info</span><span style="color:#179fff">(</span><span style="color:#969696;background:rgba(110,110,110,.1);margin-right:1.3px">format:</span><span style="color:#ce9178">&quot;Tenant(s) {} was/were successfully upgraded&quot;</span><span style="color:#d4d4d4">, </span><span style="color:#4ec9b0">String</span><span style="color:#d4d4d4">.</span><span style="color:#dcdcaa">join</span><span style="color:#ffd700">(</span><span style="color:#969696;background:rgba(110,110,110,.1);margin-right:1.3px">delimiter:</span><span style="color:#ce9178">&quot;, &quot;</span><span style="color:#d4d4d4">, </span><span style="color:#9cdcfe">context</span><span style="color:#d4d4d4">.</span><span style="color:#dcdcaa">getTenants</span><span style="color:#da70d6">(</span><span style="color:#da70d6">)</span><span style="color:#ffd700">)</span><span style="color:#179fff">)</span><span style="color:#d4d4d4">;</span></div>
<div class="t" style="left:112.6px;top:787.8px;font-size:14.40px;line-height:16px;color:#6e7681;font-family:'Liberation Mono', monospace;">50</div>
<div class="t" style="left:190.8px;top:788.4px;font-size:14.40px;line-height:16px;color:#d4d4d4;font-family:'Liberation Mono', monospace;white-space:pre;-webkit-text-stroke:0.25px currentColor;"><span style="color:#da70d6">}</span></div>
<div class="t" style="left:112.6px;top:809.4px;font-size:14.40px;line-height:16px;color:#6e7681;font-family:'Liberation Mono', monospace;">51</div>
<div class="t" style="left:112.6px;top:831.0px;font-size:14.40px;line-height:16px;color:#6e7681;font-family:'Liberation Mono', monospace;">52</div>
<div class="t" style="left:190.8px;top:831.6px;font-size:14.40px;line-height:16px;color:#d4d4d4;font-family:'Liberation Mono', monospace;white-space:pre;-webkit-text-stroke:0.25px currentColor;"><span style="color:#6a9955">/**</span></div>
<div class="t" style="left:112.6px;top:852.6px;font-size:14.40px;line-height:16px;color:#6e7681;font-family:'Liberation Mono', monospace;">53</div>
<div class="t" style="left:190.8px;top:853.2px;font-size:14.40px;line-height:16px;color:#d4d4d4;font-family:'Liberation Mono', monospace;white-space:pre;-webkit-text-stroke:0.25px currentColor;"><span style="color:#6a9955"> * Upgrade a specified tenant</span></div>
<div class="t" style="left:112.6px;top:874.2px;font-size:14.40px;line-height:16px;color:#6e7681;font-family:'Liberation Mono', monospace;">54</div>
<div class="t" style="left:190.8px;top:874.8px;font-size:14.40px;line-height:16px;color:#d4d4d4;font-family:'Liberation Mono', monospace;white-space:pre;-webkit-text-stroke:0.25px currentColor;"><span style="color:#6a9955"> *</span></div>
<div class="t" style="left:112.6px;top:895.8px;font-size:14.40px;line-height:16px;color:#cccccc;font-family:'Liberation Mono', monospace;">55</div>
<div class="t" style="left:190.8px;top:896.4px;font-size:14.40px;line-height:16px;color:#d4d4d4;font-family:'Liberation Mono', monospace;white-space:pre;-webkit-text-stroke:0.25px currentColor;"><span style="color:#6a9955"> * </span><span style="color:#569cd6">@param</span> <span style="color:#9cdcfe">tenant</span><span style="color:#6a9955"> - id of the tenant to be upgraded</span></div>
<div class="t" style="left:112.6px;top:917.4px;font-size:14.40px;line-height:16px;color:#6e7681;font-family:'Liberation Mono', monospace;">56</div>
<div class="t" style="left:190.8px;top:918.0px;font-size:14.40px;line-height:16px;color:#d4d4d4;font-family:'Liberation Mono', monospace;white-space:pre;-webkit-text-stroke:0.25px currentColor;"><span style="color:#6a9955"> */</span></div>
<div class="t" style="left:112.6px;top:939.0px;font-size:14.40px;line-height:16px;color:#6e7681;font-family:'Liberation Mono', monospace;">57</div>
<div class="t" style="left:190.8px;top:939.6px;font-size:14.40px;line-height:16px;color:#d4d4d4;font-family:'Liberation Mono', monospace;white-space:pre;-webkit-text-stroke:0.25px currentColor;"><span style="color:#569cd6">public</span> <span style="color:#4ec9b0">void</span> <span style="color:#dcdcaa">upgradeTenant</span><span style="color:#da70d6">(</span><span style="color:#4ec9b0">String</span> <span style="color:#9cdcfe">tenant</span><span style="color:#da70d6">)</span> <span style="color:#da70d6">{</span></div>
<div class="t" style="left:112.6px;top:960.6px;font-size:14.40px;line-height:16px;color:#6e7681;font-family:'Liberation Mono', monospace;">58</div>
<div class="t" style="left:225.3px;top:961.2px;font-size:14.40px;line-height:16px;color:#d4d4d4;font-family:'Liberation Mono', monospace;white-space:pre;-webkit-text-stroke:0.25px currentColor;"><span style="color:#4ec9b0">DeploymentService</span> <span style="color:#9cdcfe">deployService</span><span style="color:#d4d4d4"> = </span><span style="color:#179fff">(</span><span style="color:#4ec9b0">DeploymentService</span><span style="color:#179fff">)</span> <span style="color:#569cd6">this</span><span style="color:#d4d4d4">.</span><span style="color:#4fc1ff">cdsRuntime</span><span style="color:#d4d4d4">.</span><span style="color:#dcdcaa">getServiceCatalog</span><span style="color:#179fff">(</span><span style="color:#179fff">)</span></div>
<div class="t" style="left:112.6px;top:982.2px;font-size:14.40px;line-height:16px;color:#6e7681;font-family:'Liberation Mono', monospace;">59</div>
<div class="t" style="left:294.4px;top:982.8px;font-size:14.40px;line-height:16px;color:#d4d4d4;font-family:'Liberation Mono', monospace;white-space:pre;-webkit-text-stroke:0.25px currentColor;"><span style="color:#d4d4d4">.</span><span style="color:#dcdcaa">getService</span><span style="color:#179fff">(</span><span style="color:#969696;background:rgba(110,110,110,.1);margin-right:1.3px">serviceClass:</span><span style="color:#4ec9b0">DeploymentService</span><span style="color:#d4d4d4">.</span><span style="color:#569cd6">class</span><span style="color:#d4d4d4">, </span><span style="color:#969696;background:rgba(110,110,110,.1);margin-right:1.3px">name:</span><span style="color:#ce9178">&quot;DeploymentService$Default&quot;</span><span style="color:#179fff">)</span><span style="color:#d4d4d4">;</span></div>
<div class="t" style="left:112.6px;top:1003.8px;font-size:14.40px;line-height:16px;color:#6e7681;font-family:'Liberation Mono', monospace;">60</div>
<div class="t" style="left:225.3px;top:1004.4px;font-size:14.40px;line-height:16px;color:#d4d4d4;font-family:'Liberation Mono', monospace;white-space:pre;-webkit-text-stroke:0.25px currentColor;"><span style="color:#c586c0">if</span> <span style="color:#179fff">(</span><span style="color:#9cdcfe">deployService</span><span style="color:#d4d4d4"> != </span><span style="color:#569cd6">null</span><span style="color:#179fff">)</span> <span style="color:#179fff">{</span></div>
<div class="t" style="left:112.6px;top:1025.4px;font-size:14.40px;line-height:16px;color:#6e7681;font-family:'Liberation Mono', monospace;">61</div>
<div class="t" style="left:259.9px;top:1026.0px;font-size:14.40px;line-height:16px;color:#d4d4d4;font-family:'Liberation Mono', monospace;white-space:pre;-webkit-text-stroke:0.25px currentColor;"><span style="color:#569cd6">this</span><span style="color:#d4d4d4">.</span><span style="color:#4fc1ff">cdsRuntime</span><span style="color:#d4d4d4">.</span><span style="color:#dcdcaa">requestContext</span><span style="color:#ffd700">(</span><span style="color:#ffd700">)</span><span style="color:#d4d4d4">.</span><span style="color:#dcdcaa">privilegedUser</span><span style="color:#ffd700">(</span><span style="color:#ffd700">)</span><span style="color:#d4d4d4">.</span><span style="color:#dcdcaa">run</span><span style="color:#ffd700">(</span><span style="color:#da70d6">(</span><span style="color:#9cdcfe">r</span><span style="color:#da70d6">)</span><span style="color:#569cd6"> -&gt; </span><span style="color:#da70d6">{</span></div>
<div class="r" style="left:744.2px;top:634.0px;width:199.4px;height:18.4px;background:#46422e"></div>
<div class="t" style="left:743.7px;top:637.2px;font-size:14.40px;line-height:16px;color:#aaa58c;font-family:'Liberation Mono', monospace;white-space:pre;-webkit-text-stroke:0.2px currentColor;">context = $Proxy185@285</div>
<div class="r" style="left:848.4px;top:655.2px;width:460.0px;height:19.0px;background:#6a6830"></div>
<div class="t" style="left:848.6px;top:658.8px;font-size:14.40px;line-height:16px;color:#c4c0a0;font-family:'Liberation Mono', monospace;white-space:pre;-webkit-text-stroke:0.2px currentColor;">LOGGER = Logger@278 &quot;Logger[my.bookshop.handlers.Sub</div>
<svg class="r" style="left:88.0px;top:658.5px;" width="13" height="13" viewBox="0 0 13 13"><path d="M1.3 1.3h6.2l4.2 5.2-4.2 5.2H1.3z" fill="#1f1f1f" stroke="#f0c41a" stroke-width="1.5" stroke-linejoin="round"/><circle cx="5.6" cy="6.5" r="2.3" fill="#e51400"/></svg>
<svg class="r" style="left:89.0px;top:768.0px;" width="9" height="9" viewBox="0 0 9 9"><circle cx="4.5" cy="4.5" r="4.2" fill="#e51400"/></svg>
<svg class="r" style="left:158.5px;top:893.0px;" width="11" height="15" viewBox="0 0 11 15"><path d="M5.5 0.8a4.5 4.5 0 0 0-2.7 8.1c.5.4.7 1 .7 1.6v.7h4v-.7c0-.6.2-1.2.7-1.6A4.5 4.5 0 0 0 5.5.8z" fill="#ffcc00"/><rect x="3.5" y="12" width="4" height="1.6" fill="#ffcc00"/></svg>
<div class="r" style="left:83.0px;top:511.0px;width:1300.0px;height:43.2px;background:#1f1f1f;box-shadow:0 3px 4px -1px rgba(0,0,0,.8)"></div>
<div class="t" style="left:112.6px;top:515.0px;font-size:14.40px;line-height:16px;color:#6e7681;font-family:'Liberation Mono', monospace;">33</div>
<div class="t" style="left:112.6px;top:536.6px;font-size:14.40px;line-height:16px;color:#6e7681;font-family:'Liberation Mono', monospace;">38</div>
<div class="t" style="left:156.2px;top:515.6px;font-size:14.40px;line-height:16px;color:#d4d4d4;font-family:'Liberation Mono', monospace;white-space:pre;-webkit-text-stroke:0.25px currentColor;"><span style="color:#569cd6">class</span> <span style="color:#4ec9b0">SubscriptionHandler</span> <span style="color:#569cd6">implements</span> <span style="color:#4ec9b0">EventHandler</span> <span style="color:#ffd700">{</span></div>
<div class="t" style="left:190.8px;top:537.2px;font-size:14.40px;line-height:16px;color:#d4d4d4;font-family:'Liberation Mono', monospace;white-space:pre;-webkit-text-stroke:0.25px currentColor;"><span style="color:#569cd6">public</span> <span style="color:#dcdcaa">SubscriptionHandler</span><span style="color:#da70d6">(</span><span style="color:#4ec9b0">CdsRuntime</span> <span style="color:#9cdcfe">cdsRuntime</span><span style="color:#da70d6">)</span> <span style="color:#da70d6">{</span></div>
<svg class="r" style="left:47.0px;top:465.0px;" width="25" height="25" viewBox="0 0 25 25"><circle cx="14.5" cy="10" r="6.8" fill="none" stroke="#9a9a9a" stroke-width="1.6"/><path d="M9.6 15L2.5 22.2" stroke="#9a9a9a" stroke-width="1.7"/></svg>
<svg class="r" style="left:47.0px;top:512.0px;" width="28" height="28" viewBox="0 0 28 28"><g fill="none" stroke="#9a9a9a" stroke-width="1.6"><circle cx="6" cy="4.5" r="2.6"/><circle cx="6" cy="20.5" r="2.6"/><circle cx="18" cy="9" r="2.6"/><path d="M6 7.1v10.8M18 11.6c0 4.5-5 4.2-9.8 7.2"/></g></svg>
<div class="r" style="left:58.5px;top:525.8px;width:17.5px;height:17.0px;background:#0078d4;border-radius:9px"></div>
<div class="t" style="left:60.6px;top:528.6px;font-size:11.00px;line-height:12px;color:#ffffff;font-family:'Liberation Sans', sans-serif;font-weight:bold;letter-spacing:0.750px;">31</div>
<svg class="r" style="left:46.0px;top:559.0px;" width="28" height="28" viewBox="0 0 28 28"><g fill="none" stroke="#9a9a9a" stroke-width="1.6"><rect x="1.6" y="9.4" width="7.6" height="7.6"/><rect x="1.6" y="17" width="7.6" height="7.6"/><rect x="9.2" y="17" width="7.6" height="7.6"/><rect x="15.6" y="2.2" width="8.2" height="8.2"/></g></svg>
<div class="r" style="left:58.8px;top:572.3px;width:17.0px;height:17.0px;background:#0078d4;border-radius:50%"></div>
<div class="t" style="left:64.2px;top:575.2px;font-size:11.00px;line-height:12px;color:#ffffff;font-family:'Liberation Sans', sans-serif;font-weight:bold;">1</div>
<svg class="r" style="left:46.0px;top:608.0px;" width="28" height="28" viewBox="0 0 28 28"><g fill="none" stroke="#9a9a9a" stroke-width="1.5"><path d="M11.5 18.5H2V2.5h21v9"/><path d="M6 22.5h6"/><circle cx="18" cy="18.2" r="5.2"/><path d="M16.6 16.3l-1.9 1.9 1.9 1.9M19.4 16.3l1.9 1.9-1.9 1.9"/></g></svg>
<svg class="r" style="left:48.0px;top:655.0px;" width="24" height="24" viewBox="0 0 24 24"><g fill="none" stroke="#9a9a9a" stroke-width="1.6" stroke-linejoin="round"><path d="M6.5 2h9M8.3 2v6.5L2.2 21.2h17.6l-6.1-12.7V2"/><path d="M5 15.5h12"/></g></svg>
<svg class="r" style="left:45.0px;top:700.0px;" width="30" height="30" viewBox="0 0 30 30"><g fill="none" stroke="#9a9a9a" stroke-width="1.6" stroke-linejoin="round"><path d="M9.5 2.5v7M9.5 2.5l15.5 8-9 4.5"/><ellipse cx="8" cy="21" rx="3.6" ry="4.3"/><path d="M2.5 17.5l2.2 1.3M2 21.5h2.3M2.5 25.5l2.2-1.3M13.5 17.5l-2.2 1.3M14 21.5h-2.3M13.5 25.5l-2.2-1.3M6 15.5l.8 1.5M10 15.5l-.8 1.5"/></g></svg>
<div class="r" style="left:58.8px;top:714.0px;width:17.0px;height:17.0px;background:#0078d4;border-radius:50%"></div>
<div class="t" style="left:64.0px;top:717.0px;font-size:11.00px;line-height:12px;color:#ffffff;font-family:'Liberation Sans', sans-serif;font-weight:bold;">2</div>
<svg class="r" style="left:46.0px;top:1071.0px;" width="26" height="26" viewBox="0 0 26 26"><g fill="none" stroke="#9a9a9a" stroke-width="1.6"><circle cx="13" cy="13" r="11.8"/><circle cx="13" cy="10" r="4.2"/><path d="M5.5 21.5c1.5-3.6 4.2-5.4 7.5-5.4s6 1.8 7.5 5.4"/></g></svg>
<svg class="r" style="left:47.0px;top:1115.0px;" width="26" height="12" viewBox="0 0 26 12"><g fill="none" stroke="#9a9a9a" stroke-width="1.6"><path d="M3 11l3-4 3 1 2-5h4l2 5 3-1 3 4"/></g></svg>
<div class="r" style="left:83.0px;top:1044.6px;width:1300.0px;height:90.0px;background:#181818;border-top:1px solid #2b2b2b"></div>
<div class="t" style="left:102.7px;top:1058.0px;font-size:10.00px;line-height:11px;color:#9d9d9d;font-family:'Liberation Sans', sans-serif;letter-spacing:-0.440px;">PROBLEMS</div>
<div class="r" style="left:165.5px;top:1053.6px;width:18.0px;height:18.0px;background:#616161;border-radius:50%"></div>
<div class="t" style="left:171.0px;top:1057.0px;font-size:11.00px;line-height:12px;color:#ffffff;font-family:'Liberation Sans', sans-serif;font-weight:bold;">6</div>
<div class="t" style="left:204.4px;top:1058.0px;font-size:10.00px;line-height:11px;color:#9d9d9d;font-family:'Liberation Sans', sans-serif;letter-spacing:-0.222px;">OUTPUT</div>
<div class="t" style="left:268.4px;top:1058.0px;font-size:10.00px;line-height:11px;color:#e7e7e7;font-family:'Liberation Sans', sans-serif;letter-spacing:-0.237px;">DEBUG CONSOLE</div>
<div class="r" style="left:266.8px;top:1072.3px;width:88.0px;height:1.2px;background:#1d7ccc"></div>
<div class="t" style="left:377.0px;top:1058.0px;font-size:10.00px;line-height:11px;color:#9d9d9d;font-family:'Liberation Sans', sans-serif;letter-spacing:-0.152px;">TERMINAL</div>
<div class="t" style="left:451.2px;top:1058.0px;font-size:10.00px;line-height:11px;color:#9d9d9d;font-family:'Liberation Sans', sans-serif;letter-spacing:-0.916px;">PORTS</div>
<div class="r" style="left:492.3px;top:1053.6px;width:21.0px;height:18.0px;background:#616161;border-radius:9px"></div>
<div class="t" style="left:496.5px;top:1057.0px;font-size:11.00px;line-height:12px;color:#ffffff;font-family:'Liberation Sans', sans-serif;font-weight:bold;letter-spacing:0.750px;">39</div>
<div class="t" style="left:535.4px;top:1058.0px;font-size:10.00px;line-height:11px;color:#9d9d9d;font-family:'Liberation Sans', sans-serif;letter-spacing:0.039px;">COMMENTS</div>
<div class="r" style="left:911.5px;top:1052.0px;width:400.0px;height:22.0px;background:#313131;border:1px solid #3c3c3c;box-sizing:border-box;border-radius:2px"></div>
<div class="t" style="left:918.0px;top:1057.0px;font-size:11.80px;line-height:14px;color:#989898;font-family:'Liberation Sans', sans-serif;letter-spacing:-0.161px;">Filter (e.g. text, !exclude, \escape)</div>
<svg class="r" style="left:88.0px;top:1081.0px;" width="10" height="10" viewBox="0 0 10 10"><path d="M1 5h7M5 2l3 3-3 3" fill="none" stroke="#7a7a7a" stroke-width="1.1"/></svg>
<div class="t" style="left:112.6px;top:1083.0px;font-size:12.50px;line-height:14px;color:#cccccc;font-family:'Liberation Mono', monospace;letter-spacing:0.006px;">context.getTenant()</div>
<svg class="r" style="left:97.0px;top:1102.0px;" width="9" height="12" viewBox="0 0 9 12"><path d="M1.5 1.5L6.5 6l-5 4.5" fill="none" stroke="#cccccc" stroke-width="1.2"/></svg>
<div class="t" style="left:112.6px;top:1103.0px;font-size:12.50px;line-height:14px;color:#ce9178;font-family:'Liberation Mono', monospace;letter-spacing:-0.333px;">&quot;t2&quot;</div>
</body></html>
